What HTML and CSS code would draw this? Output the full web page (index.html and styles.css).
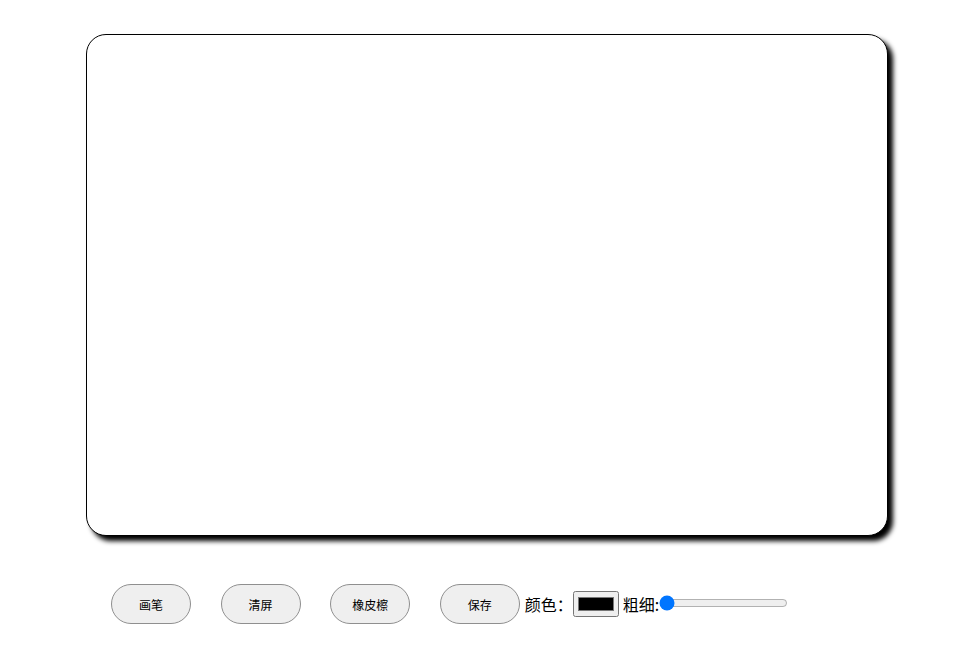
FILE: index.html
```html
<!DOCTYPE html>
<html lang="zh-CN">
<head>
  <meta charset="UTF-8" />
  <title>画板</title>
  <meta name="viewport" content="width=device-width, initial-scale=1.0" />
  <link rel="stylesheet" href="styles.css">
</head>
<body>
  <canvas id="board" width="800" height="500"></canvas>

  <div class="tools">
    <button id="pen">画笔</button>
    <button id="clear">清屏</button>
    <button id="eraser">橡皮檫</button>
    <button id="save">保存</button>
    <span class="label">颜色：</span>
    <input type="color" id="color" value="#000000" />
    <span class="label thin">粗细:</span>
    <input type="range" id="size" min="1" max="50" value="1" />
  </div>
</body>
</html>
```

FILE: styles.css
```css
body {
  margin: 8px;
  font-family: "Noto Sans CJK SC", "Noto Sans", sans-serif;
  background: white;
}

#board {
  display: block;
  margin: 26px 0 0 78px;
  border: 1px solid black;
  border-radius: 20px;
  box-shadow: 5px 5px 5px black;
  background: white;
}

.tools {
  display: flex;
  align-items: center;
  margin: 48px 0 0 103px;
}

button {
  width: 80px;
  height: 40px;
  margin-right: 29.6px;
  border: 1px solid #8f8f8f;
  border-radius: 20px;
  background: #efefef;
  font-family: inherit;
  font-size: 12px;
  color: black;
  cursor: pointer;
}

#save {
  margin-right: 5px;
}

.label {
  font-size: 16px;
  color: black;
}

#color {
  width: 46px;
  height: 26px;
  margin: 0 4px 0 0;
}

#size {
  width: 129px;
  margin: 0 2px 3px 0;
}
```
